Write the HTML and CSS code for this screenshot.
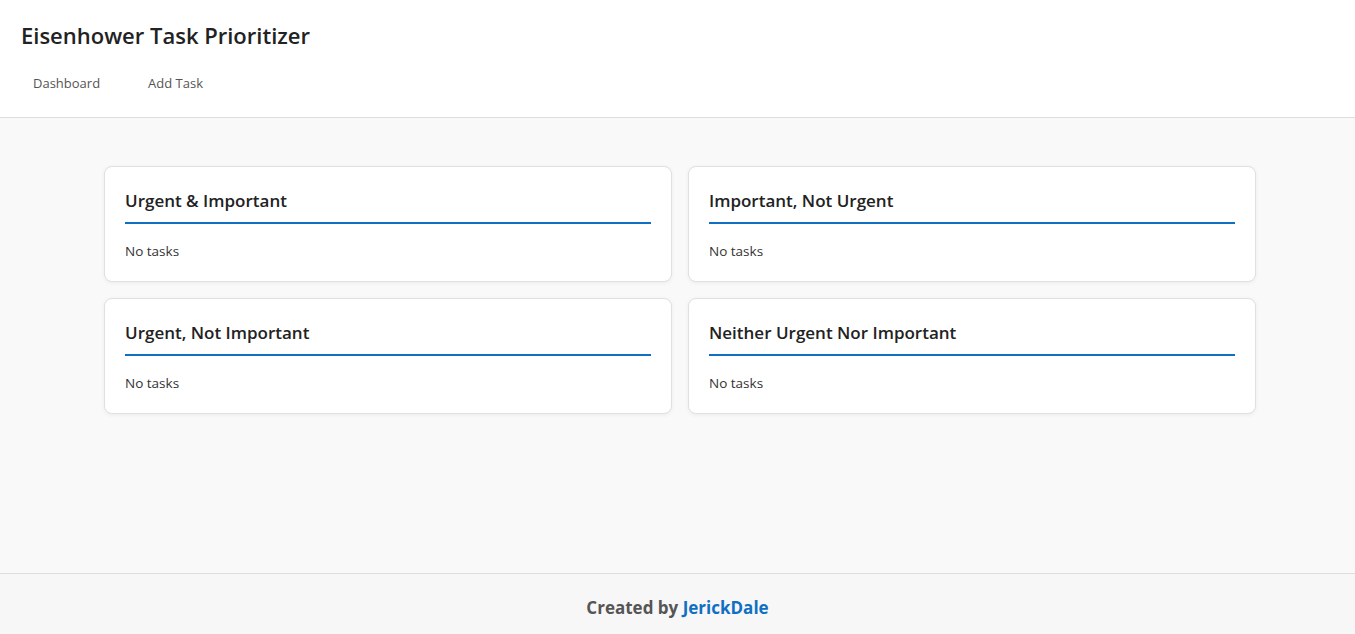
FILE: index.html
```html
<!DOCTYPE html>
<html lang="en">
<head>
<meta charset="utf-8">
<title>Eisenhower Task Prioritizer</title>
<link rel="stylesheet" href="styles.css">
</head>
<body>
<header class="site-header">
  <h1 class="site-title">Eisenhower Task Prioritizer</h1>
  <nav class="site-nav">
    <a class="nav-link" href="#">Dashboard</a>
    <a class="nav-link" href="#">Add Task</a>
  </nav>
</header>
<main class="main">
  <div class="matrix">
    <section class="quadrant">
      <h2 class="quadrant-title">Urgent &amp; Important</h2>
      <p class="empty">No tasks</p>
    </section>
    <section class="quadrant">
      <h2 class="quadrant-title">Important, Not Urgent</h2>
      <p class="empty">No tasks</p>
    </section>
    <section class="quadrant">
      <h2 class="quadrant-title">Urgent, Not Important</h2>
      <p class="empty">No tasks</p>
    </section>
    <section class="quadrant">
      <h2 class="quadrant-title">Neither Urgent Nor Important</h2>
      <p class="empty">No tasks</p>
    </section>
  </div>
</main>
<footer class="site-footer">
  <p class="credit">Created by <a class="credit-link" href="#">JerickDale</a></p>
</footer>
</body>
</html>
```
FILE: styles.css
```css
* { box-sizing: border-box; }
html, body { height: 100%; }
body {
  margin: 0;
  font-family: "Open Sans", "Noto Sans", sans-serif;
  color: #222;
  background: #f9f9f9;
  display: flex;
  flex-direction: column;
  min-height: 100vh;
}
.site-header {
  background: #fff;
  border-bottom: 1px solid #ddd;
  padding: 20px 21px 0;
  height: 118px;
  flex-shrink: 0;
}
.site-title {
  margin: 0;
  font-size: 22px;
  font-weight: 600;
  line-height: 30px;
  color: #222;
}
.site-nav {
  display: flex;
  margin-top: 20px;
}
.nav-link {
  color: #555;
  text-decoration: none;
  font-size: 13px;
  line-height: 18px;
  padding: 4px 12px;
  margin-right: 24px;
}
.main {
  flex: 1;
  padding: 48px 0 48px 5px;
}
.matrix {
  width: 1152px;
  margin: 0 auto;
  display: grid;
  grid-template-columns: 1fr 1fr;
  gap: 16px;
}
.quadrant {
  background: #fff;
  border: 1px solid #e0e0e0;
  border-radius: 8px;
  box-shadow: 0 1px 4px rgba(0,0,0,0.06);
  padding: 21px 20px 20px;
  height: 116px;
}
.quadrant-title {
  margin: 0;
  font-size: 17px;
  font-weight: 600;
  line-height: 26px;
  padding-bottom: 8px;
  border-bottom: 2px solid #0f6fc2;
  color: #222;
}
.empty {
  margin: 17px 0 0;
  font-size: 13.5px;
  line-height: 20px;
  color: #333;
}
.site-footer {
  background: #f7f7f7;
  border-top: 1px solid #ddd;
  height: 61px;
  flex-shrink: 0;
  display: flex;
  align-items: center;
  justify-content: center;
  padding-top: 6px;
}
.credit {
  margin: 0;
  font-size: 17px;
  font-weight: 700;
  color: #555;
}
.credit-link {
  color: #0f6fc2;
  text-decoration: none;
}
```
